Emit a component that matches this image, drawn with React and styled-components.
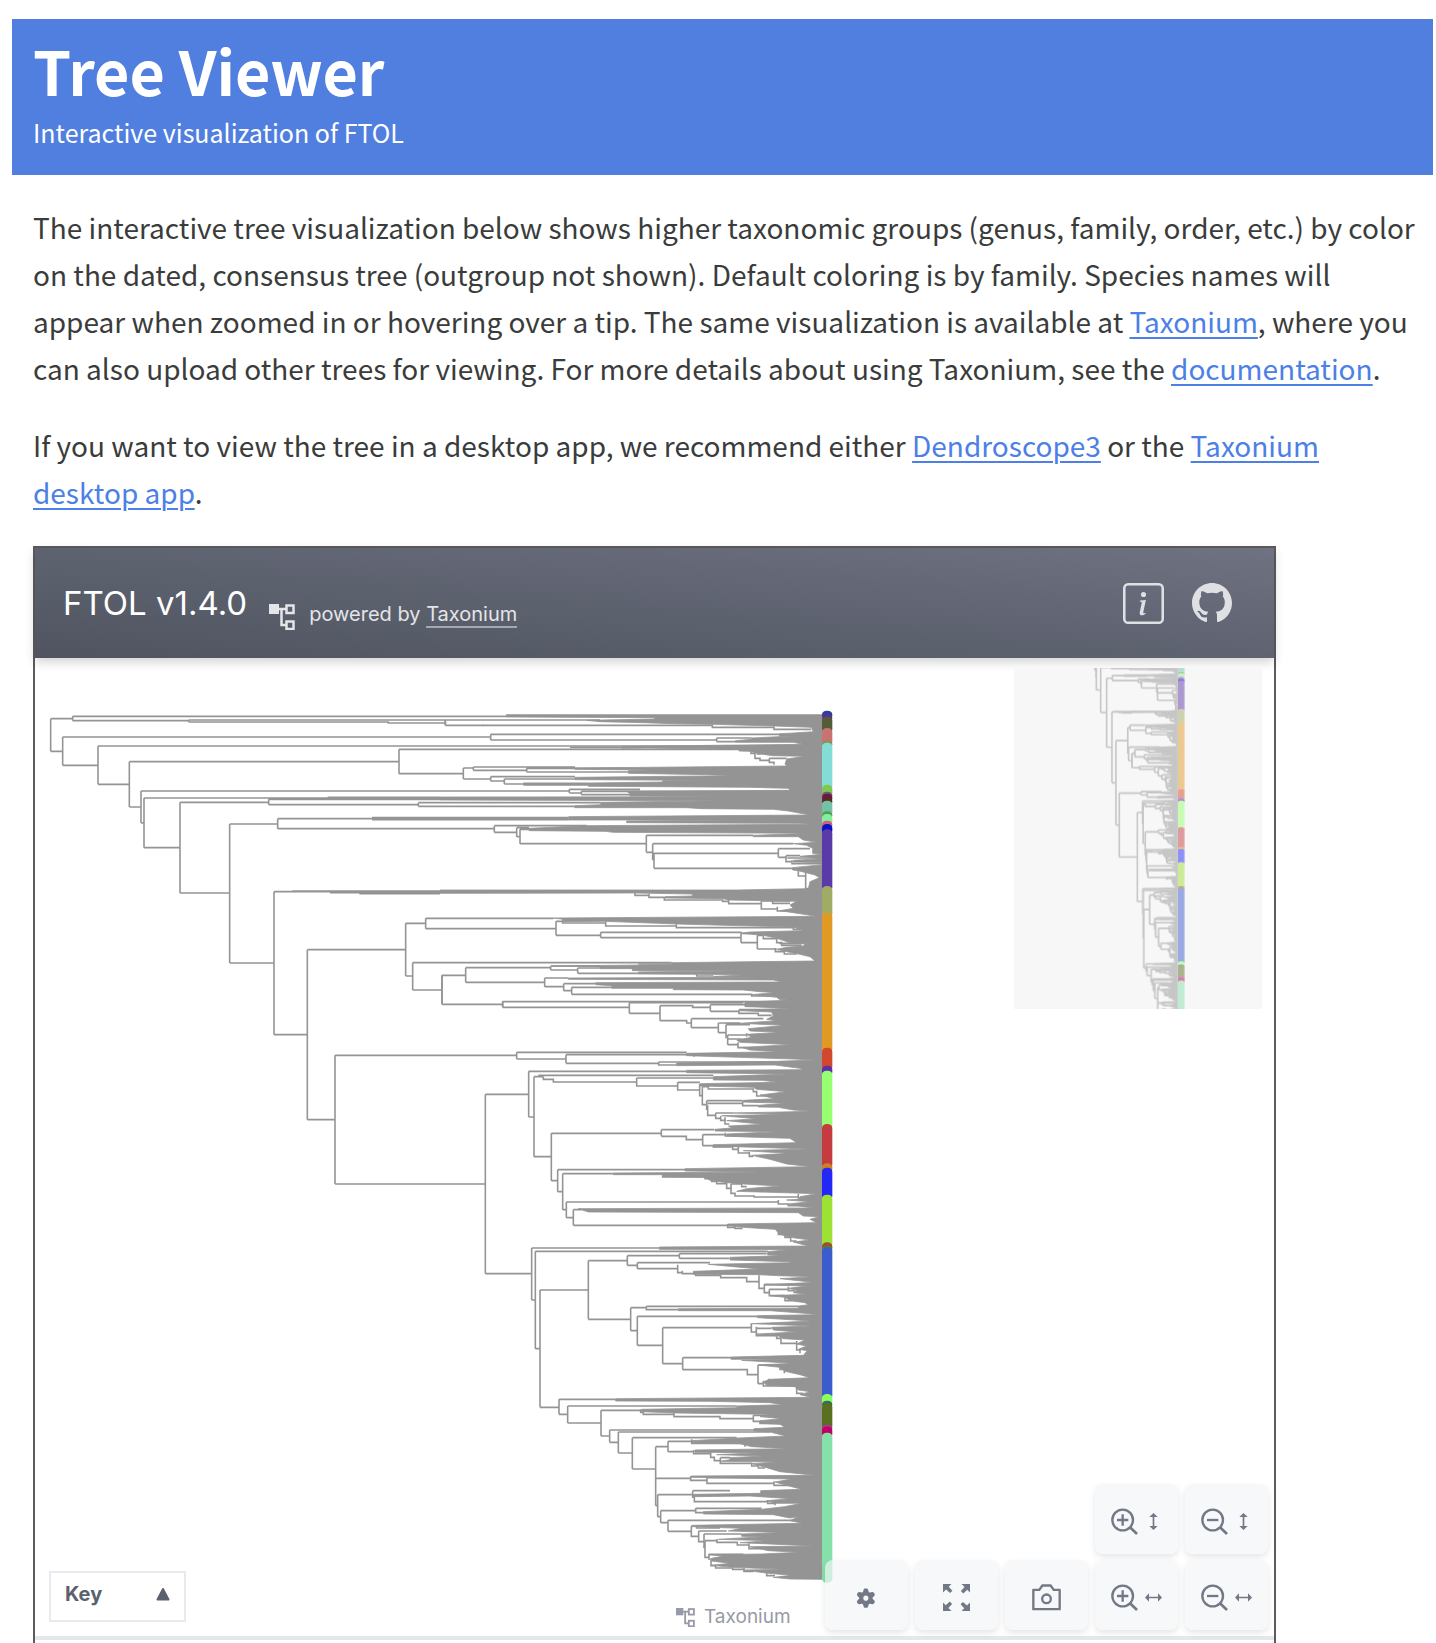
import React from "react";
import styled, { createGlobalStyle } from "styled-components";
import { BsInfoSquare, BsGithub } from "react-icons/bs";
import { TiCog } from "react-icons/ti";

const GlobalStyle = createGlobalStyle`
  *, *::before, *::after { box-sizing: border-box; }
  body {
    margin: 0;
    background: #fff;
    color: #3a3c3c;
    font-family: "Noto Sans CJK JP", "Noto Sans", sans-serif;
  }
`;

const Page = styled.div`
  padding: 19px 3px 0 12px;
`;

const TitleBanner = styled.header`
  padding: 13px 21px 19px;
  background: #507fdf;
  color: #fff;
`;

const Title = styled.h1`
  margin: 0;
  font-size: 61px;
  font-weight: 700;
  line-height: 76px;
`;

const Subtitle = styled.p`
  margin: 0;
  font-size: 25px;
  line-height: 48px;
`;

const Content = styled.main`
  padding: 29px 9px 0 21px;
`;

const Paragraph = styled.p`
  margin: 0 0 30px;
  font-size: 28px;
  line-height: 47px;
`;

const TextLink = styled.a`
  color: #4c80e6;
  text-decoration: underline;
  text-decoration-thickness: 2px;
  text-underline-offset: 4px;
`;

const Viewer = styled.section`
  width: 90%;
  max-width: 1243px;
  padding-bottom: 3px;
  border: 2px solid #5c5c5c;
  border-bottom: 0;
  font-family: Inter, "Liberation Sans", sans-serif;
`;

const ViewerBar = styled.div`
  position: relative;
  display: flex;
  align-items: center;
  gap: 22px;
  height: 110px;
  padding: 0 42px 0 28px;
  color: #fff;
  background: linear-gradient(to top right, #4f5460, #6e7281);
  box-shadow: 0 4px 10px rgba(0, 0, 0, 0.18);
`;

const ViewerTitle = styled.h2`
  margin: 0;
  font-size: 33px;
  font-weight: 400;
  line-height: 40px;
`;

const Powered = styled.div`
  display: flex;
  align-items: flex-end;
  gap: 14px;
  padding-top: 22px;
  font-size: 20px;
  line-height: 32px;
  color: #e4e5e8;
`;

const PoweredLink = styled.a`
  color: inherit;
  text-decoration: none;
  border-bottom: 2px solid #a5a8b0;
`;

const BarLinks = styled.nav`
  display: flex;
  gap: 28px;
  margin-left: auto;
`;

const IconLink = styled.a`
  display: flex;
  color: #dfe0e4;
`;

const Canvas = styled.div`
  position: relative;
  border-bottom: 4px solid #e5e7eb;
`;

const TreeDrawing = styled.svg`
  display: block;
  width: 100%;
`;

const Minimap = styled.svg`
  position: absolute;
  top: 10px;
  right: 12px;
  width: 248px;
  height: 341px;
  background: #f7f7f7;
`;

const Branches = styled.path`
  fill: none;
  stroke: #949494;
  stroke-width: ${(p) => p.$weight};
  vector-effect: non-scaling-stroke;
`;

const TipMass = styled.path`
  fill: #949494;
  stroke: #949494;
  stroke-width: ${(p) => p.$weight / 2};
  vector-effect: non-scaling-stroke;
`;

const KeyButton = styled.button`
  position: absolute;
  left: 14px;
  bottom: 14px;
  display: flex;
  align-items: center;
  justify-content: space-between;
  width: 137px;
  height: 51px;
  padding: 0 14px 6px;
  border: 2px solid #e8eaef;
  background: #fff;
  color: #5b616e;
  font: 700 20px/28px Inter, "Liberation Sans", sans-serif;
`;

const Credit = styled.a`
  position: absolute;
  left: 641px;
  bottom: 7px;
  display: flex;
  align-items: center;
  gap: 9px;
  color: #969ba6;
  font-size: 19px;
  line-height: 24px;
  text-decoration: none;
`;

const Controls = styled.div`
  position: absolute;
  right: 6px;
  bottom: 6px;
  display: grid;
  grid-template-columns: repeat(5, 83px);
  gap: 6px 7px;
`;

const ControlButton = styled.button`
  grid-column: ${(p) => p.$column};
  display: flex;
  align-items: center;
  justify-content: center;
  gap: 7px;
  height: 70px;
  padding: 4px 0 0;
  border: 0;
  border-radius: 8px;
  background: rgba(243, 244, 247, 0.67);
  color: #737886;
  box-shadow: 0 3px 6px rgba(0, 0, 0, 0.1);
`;

/* Branch lines and the filled tip region of each clade, in clade-local units. */
const clades = [
  {
    x: 0,
    y: 0,
    lines:
      "M62 86V184M62 86H128M128 79V92M128 79H1430M128 92H476M476 90V96M476 90H1710M476 96H1075V99H1246M1246 92V106M1246 106H1360" +
      "M62 184H98M98 141V226M98 141H1382M98 226H204M204 168V283M204 168H2318M204 283H298M298 215V351M298 215H1107M1107 178V251M1107 178H2127M1107 251H1300" +
      "M298 351H333M333 303V399M333 303H1618M333 399H342M342 324V473M342 324H1230M893 322H1230M342 473H450M450 337V609M450 337H716M716 328V344M716 328H1230M716 344H1165M1165 338V349M1165 338H1712M1165 349H1634" +
      "M450 609H599M599 402V819M599 402H743M743 386V416M743 386H1616M1026 383H1616M1026 389H1616M743 416H1393" +
      "M599 819H732M732 605V1034M732 605H1230M787 603H1230M900 608H1230M988 611H1230" +
      "M732 1034H832M832 779V1289M832 779H1127M1127 700V858M1127 700H1187M1187 685V716M1187 685H1570M1187 716H1578M1127 858H1148M1148 818V900M1148 818H1925M1148 900H1236M1236 856V943M1236 856H1307M1236 943H1417" +
      "M832 1289H915M915 1096V1482M915 1096H1459M915 1482H1365",
    mass: "",
  },
  {
    x: 1230,
    y: 0,
    lines:
      "M16 92V106M128 106H817M817 103V112H1002M1002 109V118H1114M152 133V150M152 133H1018M152 150H830M830 144V155M830 144H935M830 155H886M390 172H545" +
      "M933 184V190H945M945 186V205H960V211H988M950 192H962M988 205V217H1002V224M988 205H1040" +
      "M70 234V267M70 234H100M100 231V241M100 231H405M100 241H260M260 235V246M260 235H560M260 246H565M70 267H152M152 260V273M152 260H405M152 273H193M193 267V282M193 267H405M193 282H250M250 280H445M250 285H445" +
      "M388 298V309M388 298H600M388 309H424M424 304V314M424 304H1050M424 314H570M163 407V427M163 407H440M163 427H230M230 413V440M230 413H267M230 440H240M240 418V461M240 418H267M240 461H619M619 436V487M619 436H940M619 487H638" +
      "M638 461V511M638 461H1060M638 490H1015M642 490V535M642 535H1060M1015 476V502M1015 476H1110M1015 502H1038M1038 497V515H1056M1038 497H1080M1056 511V521H1146M1042 504H1146M1075 540V558H1097M1097 545V596H1106" +
      "M585 609V616H627M627 611V622H673M673 620V630H848V634H866M866 630V641H964M964 632V657H1012M1012 650V663H1040M964 633H1050M998 634V640H1050" +
      "M348 694V736M348 694H368M368 688V699H497M497 694V708H709M709 702V713H1060V718H1092M348 736H482M482 727V743M482 727H905M482 743H903M903 730V758M903 730H970M903 758H952M952 736V777M952 736H970M952 777H1010M970 736V746H1010V758H1025V766H1085M1018 760H1085M1006 774V785H1033V792H1070" +
      "M595 822H695M6 856V943M77 833V877M77 833H332M332 828V840M332 828H480M332 840H413M413 834V850M413 834H480M413 850H595M77 877H314M314 864V890M314 864H385M314 890H371M371 881V902M371 881H467M371 902H395M395 892V913M395 892H515M395 913H935V918H990M188 935V952M188 935H1078M188 952H568M770 853V858H820",
    mass:
      "M1146 74H199V81L648 83L640 87L440 91L480 95L610 98L700 101L817 103L1002 108L1114 112L1120 125L1060 129L1018 131V138L1060 138L935 144V148L886 152V157L1060 157L1090 163L545 169V175L620 174L897 178V183L930 184L960 192L1000 197L1095 199L1040 207L1035 222L1040 228L405 234V238L630 240L565 242V250L800 254L880 257L405 262V269L810 271L668 272V276L445 279V289L640 290L930 292L1045 295L1050 301L560 304L570 311V318L910 320L1100 320L0 321V330L850 332L482 337V344L404 347V353L740 353L785 356L1000 358L1045 363L1110 375L386 380V390L900 390L560 393V398L1080 400L1108 403L438 407L267 415V422L495 424L520 427L1110 430L940 436V440L1075 440L1090 450L1130 457L1060 461L1100 466L1118 475V490L1146 493L1080 499L1146 506L1060 511V516L1146 518V524L1058 533V540L1075 542L1125 555L1138 563L1110 575L1105 596L890 600H0V610L585 609L757 612V618L675 620V624L850 626L866 630L1070 634L1050 645L1060 655L1020 662L1060 668L1130 679L340 684L370 688V695L495 694L710 702L855 706L1060 711L1090 722L930 726L905 730L970 736L1010 745L1050 758L1095 762L1090 768L1040 772L1010 778L1040 785L1080 793L1110 800L1125 813L695 818V824L335 828L480 830V836L577 836V842L925 842L595 846V852L770 853L905 855L820 860L1000 862L385 864V868L1000 870L1025 876L467 878V884L515 887V895H700V899L910 900L960 905L1005 908L935 914L1010 922L1020 929L1078 931L915 937V948L1050 954L1146 956Z",
  },
  {
    x: 1260,
    y: 930,
    lines:
      "M158 4V22M538 8V40M538 8H880M538 40H630M630 17V62M630 17H728V22H781M781 14V34M781 14H885M781 34H867M867 29V40H925V46H965M867 29H970M630 62H710V69H724M724 56V83M724 56H940M724 83H805M805 69V98M805 69H870M805 98H828M828 74V115M833 105V134M833 105H890M890 100V110M833 117H875M833 134H864M864 127V143H890M828 74H900" +
      "M200 157V177M200 157H710M200 177H348M348 164V190M348 164H710M348 190H626M626 186V195H680M626 186H975M710 164H732V170M106 283V821M106 283H236M236 214V351M236 214H710M236 351H252M252 230V470M252 230H280M265 226H790M280 230V238H310V246H560M560 234V258H683M560 234H790M683 247V270H749M683 247H750M749 252V287H757M757 260V314H770M757 260H775M775 256V267H910V275H920V288H960" +
      "M770 302V330M770 302H878M773 316V346H797M797 339V355H812V361H825V372H838M812 348V361M825 352V372M797 339H850M878 303V317H925M773 310H878M252 470H304M304 400V542M304 400H634M634 389V409M634 389H793M634 409H709V419H758M758 404V437M758 404H826M758 437H790V441H848M826 398V408H890M848 437V448H865V459H898M898 456V469H910M865 440V459" +
      "M304 542H323M323 509V575M323 509H706M323 575H338M338 521V629M338 521H490M338 629H349M349 606V653M349 606H985M349 653H370M370 629V676M370 629H395M370 676H833M638 522V531H765V536H785V544H800V551H830M830 547V565H843V580H855V588H912V591H1045M843 552V580M843 552H875V560H890M985 600V612H1015V617H1060M1045 582V596" +
      "M833 672V682H855V685H878M985 690V703H1005V712H1022V723H1040M106 821H245",
    mass:
      "M1116 0H1045L915 5L885 8V20L1020 24L870 32L965 36L970 48L950 58L980 62L870 70L1005 76L895 86L900 93L990 97L890 103L905 112L860 120L870 127L1025 134L875 142L900 150L995 155L710 160V167L1030 177L1095 180L980 184L680 189V197L975 195L1050 205L1060 209L710 211V218L1015 222L790 230V240L935 241L985 247L750 251V258L910 262L920 268L1010 275L930 285L975 296L880 301V306L1008 310L925 316V321L985 322L1030 330L1085 334L850 339L1000 343L815 347L870 352L920 356L830 362L940 373L835 378L845 384L795 388V393L985 395L830 402V408L890 411L1020 415L1040 428L790 434V441L850 440L1075 447L880 452L1018 460L905 466L960 478L1010 492L1083 500L705 506V513L950 516L490 519V524H640V530L765 532L780 541L830 548L880 552L990 558L890 566L860 574L1100 581L1050 590L1045 598L1010 600L1080 605L1015 612L1060 620L1090 624L385 626L415 636L1045 638L1060 648L1108 650L1080 658L1100 668L833 672V677L880 682L975 688L990 703L1020 712L1080 720L1030 726L1075 738L628 741V748L1045 749L1116 750Z",
  },
  {
    x: 1260,
    y: 1620,
    lines:
      "M245 54V210M245 54H628M245 210H256M256 64V356M256 64H953M256 356H270M270 180V532M270 180H415M415 92V268M415 92H532M532 77V106M532 77H688M688 71V85M688 71H950M688 85H838M532 106H562M562 98V116M562 98H780M562 116H683M683 104V128H697M697 122V131H737M737 127V136H812M812 134V143H890V155H927M927 136V175H943M943 163V188H958M943 163H1070M958 178V197H1005M958 178H1015M1015 170V182H1035M1005 197V212H1025" +
      "M415 268H542M542 233V302M542 233H589M589 229V239H685M589 229H1045M542 302H562M562 259V346M562 259H922M562 346H638M638 293V401M638 293H904M904 280V306H919M919 290V317H980M919 295H965M638 401H698M698 383V419M698 383H843M698 419H892V434H924M924 405V461M924 405H990V418H1003V430M924 461H940M940 452V468H1037M957 446V456M980 312V325H993V340H1040M993 318V340M1040 333V360H1050V370M1040 470V490H1060" +
      "M270 532H327M327 508V553M327 508H497M327 553H353M353 528V579M353 528H860M353 579H453M453 541V618M453 541H575M572 538V547H580V553H672M672 548V560H810V566H910M910 556V574H930V580H990M910 556H950M453 618H479M479 600V637M479 600H912M479 637H505M505 606V669M505 606H960M505 669H547M547 623V717M547 623H860M547 717H617" +
      "M617 650V827M617 650H654M654 634V665M654 634H725M725 628V640H885V650M654 665H731M731 660V671H782V682H793V692H811V700H905V708H925V714H945M782 664V680M811 683H840M811 683V695M617 745H722M722 739V751H771M771 743V760H972M771 743H980M972 754V766H1025M617 827H623M623 794V860M623 794H728M728 782V804M728 782H840M733 795V815H953M953 810V820H975V826" +
      "M623 860H632M632 842V878M632 842H737M737 835V848H760M737 835H935M632 878H654M654 871V904M654 871H1030M654 904H724M724 888V919H746M746 903V935H762M746 903H830M740 886V894H810M762 912V955M762 912H875M765 932H801M765 932V982H777M801 927V937H862M862 935V945H897V956H935M897 940V956M777 973V990M777 973H880M783 985V1007H797V1014H848M848 1012V1018H882V1024H910M882 1014V1024M950 1028V1037H975",
    mass:
      "M1116 56H1045L953 65V75L1000 77L840 82V90L1020 95V98L775 103L850 110L930 117L730 124V133L925 134L985 137L1090 140L990 146L1090 157L945 165L1070 168L1015 175L1040 180L1030 188L1070 193L960 197L1005 202L1020 212L1065 218L1075 224L1045 228V235L685 236V242L960 242L1065 250L1105 254L922 257V263L1085 273L905 281L1085 288L965 292L970 300L1040 306L920 312L985 318L1000 326L1065 330L1040 342L1070 348L1045 358L1072 362L1060 376L843 381V388L1025 387L875 391L1028 400L925 405L990 412L1005 424L1050 434L1080 443L957 448L940 456L950 466L1035 470L1045 480L1080 485L1050 494L1083 502L497 506V513L785 514L960 518L1000 524L860 528V533L575 538V545L680 549L955 553L930 560L995 566L930 572V580L990 583L1005 592L912 596V603L960 606L1008 618L865 624L725 632V638L870 641L905 650L1015 656L735 660V667L925 668L800 674L940 678L840 683V689L810 694L985 696L905 701L940 710L990 725L1095 736L723 738V742L1025 747L975 756L1025 770L1055 778L932 782V790L730 793V800L900 798L1020 806L950 812L975 820L1055 820L1003 830L935 838L760 845V852L970 854L1020 864L1045 860L1020 872L1058 880L725 886V890L875 895L835 903L1000 908L875 912V919L940 920L805 928L955 932L870 938L1095 948L900 950L955 962L1050 967L935 972L775 974L820 978L785 985V993L840 1000L785 1006L845 1012L1010 1018L880 1020L955 1030L1025 1036L970 1042L1020 1047L1116 1048Z",
  },
];

/* Where each family starts along the tips, and its colour. */
const families = [
  [62, "#2a3f9a"], [72, "#5a2e96"], [80, "#525c36"], [114, "#c97272"],
  [152, "#7d9a50"], [158, "#84dcd6"], [284, "#80c950"], [305, "#6b5a80"],
  [311, "#6b1a3f"], [322, "#5a2a2a"], [332, "#74c2a6"], [364, "#4fa050"],
  [372, "#86ef9f"], [392, "#d0607a"], [402, "#0a10c8"], [418, "#5a3aa8"],
  [588, "#a0ab66"], [668, "#e09a24"], [1073, "#d4472f"], [1127, "#5a30a8"],
  [1142, "#98ff70"], [1302, "#c43c40"], [1420, "#cc8020"], [1433, "#2328f8"],
  [1514, "#9be234"], [1657, "#9a5030"], [1668, "#5a7a40"], [1672, "#3b5ccc"],
  [2112, "#8aff60"], [2132, "#3a6a5a"], [2140, "#5a7020"], [2204, "#b030a0"],
  [2210, "#c00060"], [2228, "#86e0aa"],
];
const TIP_X = 2376;
const TIP_END = 2678;

function Phylogeny({ weight }) {
  return clades.map((clade) => (
    <g key={`${clade.x}-${clade.y}`} transform={`translate(${clade.x} ${clade.y})`}>
      <TipMass d={clade.mass} $weight={weight} />
      <Branches d={clade.lines} $weight={weight} />
    </g>
  ));
}

function FamilyStrip({ width, rx, ry }) {
  return families.map(([start, color], i) => {
    const next = families[i + 1];
    const end = next ? next[0] + 16 : TIP_END;
    return (
      <rect key={start} x={TIP_X} y={start} width={width} height={end - start} rx={rx} ry={ry} fill={color} />
    );
  });
}

function TreeLogo({ size }) {
  return (
    <svg width={size} height={size} viewBox="0 0 26 26" fill="none" stroke="currentColor" strokeWidth="2.500" aria-hidden="true">
      <rect x="0" y="0" width="10" height="10" fill="currentColor" stroke="none" />
      <path d="M9 5H17M12.500 5V21H17" />
      <rect x="17.500" y="1.500" width="7" height="7.500" />
      <rect x="17.500" y="17.500" width="7" height="7.500" />
    </svg>
  );
}

function ZoomIcon({ plus }) {
  return (
    <svg width="27" height="27" viewBox="0 0 81 81" fill="none" stroke="currentColor" strokeWidth="7" aria-hidden="true">
      <circle cx="35" cy="36" r="31" />
      <path d="M57 58L78 78" strokeWidth="8" />
      <path d={plus ? "M18 36H52M35 19V53" : "M18 36H52"} />
    </svg>
  );
}

function SpanArrow({ vertical }) {
  return (
    <svg width="17" height="17" viewBox="0 0 51 51" fill="currentColor" aria-hidden="true">
      <g transform={vertical ? "rotate(90 25.500 25.500)" : undefined}>
        <path d="M0 25.500L12 13V23H39V13L51 25.500L39 38V28H12V38Z" />
      </g>
    </svg>
  );
}

function ExpandIcon() {
  return (
    <svg width="27" height="27" viewBox="0 0 80 80" fill="currentColor" aria-hidden="true">
      {[0, 90, 180, 270].map((turn) => (
        <path key={turn} transform={`rotate(${turn} 40 40)`} d="M0 0H25L17 8L28 20L21 27L9 16L0 25Z" />
      ))}
    </svg>
  );
}

function CameraIcon() {
  return (
    <svg width="29" height="27" viewBox="0 0 87 80" fill="none" stroke="currentColor" strokeWidth="7" strokeLinejoin="round" aria-hidden="true">
      <path d="M4 17H22L31 4H56L65 17H83V75H4Z" />
      <circle cx="43.500" cy="44" r="13" />
    </svg>
  );
}

export default function App() {
  return (
    <>
      <GlobalStyle />
      <Page>
        <TitleBanner>
          <Title>Tree Viewer</Title>
          <Subtitle>Interactive visualization of FTOL</Subtitle>
        </TitleBanner>
        <Content>
          <Paragraph>
            The interactive tree visualization below shows higher taxonomic groups (genus, family, order, etc.) by
            color on the dated, consensus tree (outgroup not shown). Default coloring is by family. Species names will
            appear when zoomed in or hovering over a tip. The same visualization is available at{" "}
            <TextLink href="#taxonium">Taxonium</TextLink>, where you can also upload other trees for viewing. For more
            details about using Taxonium, see the <TextLink href="#documentation">documentation</TextLink>.
          </Paragraph>
          <Paragraph>
            If you want to view the tree in a desktop app, we recommend either{" "}
            <TextLink href="#dendroscope">Dendroscope3</TextLink> or the{" "}
            <TextLink href="#desktop">Taxonium desktop app</TextLink>.
          </Paragraph>
          <Viewer>
            <ViewerBar>
              <ViewerTitle>FTOL v1.4.0</ViewerTitle>
              <Powered>
                <TreeLogo size={26} />
                <span>
                  powered by <PoweredLink href="#taxonium">Taxonium</PoweredLink>
                </span>
              </Powered>
              <BarLinks>
                <IconLink href="#about" aria-label="About">
                  <BsInfoSquare size={41} />
                </IconLink>
                <IconLink href="#github" aria-label="GitHub">
                  <BsGithub size={40} />
                </IconLink>
              </BarLinks>
            </ViewerBar>
            <Canvas>
              <TreeDrawing viewBox="15 -96 3717 2934" role="img" aria-label="Phylogenetic tree">
                <Phylogeny weight={1.6} />
                <FamilyStrip width={31} rx={14} ry={12} />
              </TreeDrawing>
              <Minimap viewBox="0 0 248 341" role="img" aria-label="Tree overview">
                <g opacity="0.5" transform="translate(68.600 -56.300) scale(0.04 0.1655)">
                  <Phylogeny weight={1.6} />
                  <FamilyStrip width={170} rx={60} ry={12} />
                </g>
              </Minimap>
              <KeyButton type="button">
                Key
                <svg width="14" height="14" viewBox="0 0 14 14" fill="currentColor" stroke="currentColor" strokeWidth="2" strokeLinejoin="round" aria-hidden="true">
                  <path d="M7 2L12.500 12.500H1.500Z" />
                </svg>
              </KeyButton>
              <Credit href="#taxonium">
                <TreeLogo size={19} />
                Taxonium
              </Credit>
              <Controls>
                <ControlButton type="button" $column={4} aria-label="Zoom in vertically">
                  <ZoomIcon plus />
                  <SpanArrow vertical />
                </ControlButton>
                <ControlButton type="button" $column={5} aria-label="Zoom out vertically">
                  <ZoomIcon />
                  <SpanArrow vertical />
                </ControlButton>
                <ControlButton type="button" $column={1} aria-label="Settings">
                  <TiCog size={31} />
                </ControlButton>
                <ControlButton type="button" $column={2} aria-label="Full screen">
                  <ExpandIcon />
                </ControlButton>
                <ControlButton type="button" $column={3} aria-label="Take screenshot">
                  <CameraIcon />
                </ControlButton>
                <ControlButton type="button" $column={4} aria-label="Zoom in horizontally">
                  <ZoomIcon plus />
                  <SpanArrow />
                </ControlButton>
                <ControlButton type="button" $column={5} aria-label="Zoom out horizontally">
                  <ZoomIcon />
                  <SpanArrow />
                </ControlButton>
              </Controls>
            </Canvas>
          </Viewer>
        </Content>
      </Page>
    </>
  );
}
